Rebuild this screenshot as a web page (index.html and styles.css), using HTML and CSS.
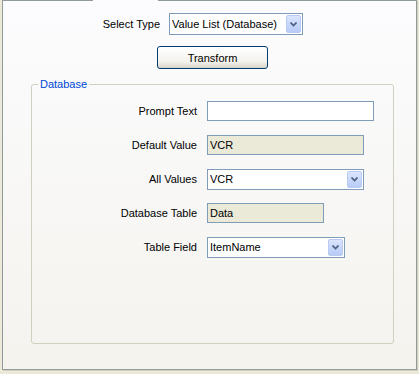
FILE: index.html
```html
<!DOCTYPE html>
<html lang="en">
<head>
    <meta charset="UTF-8">
    <title>Value List Settings</title>
    <link rel="stylesheet" href="styles.css">
</head>
<body>
    <div class="tabpage">
        <div class="type-row">
            <label class="type-label">Select Type</label>
            <div class="combo type-combo">
                <span class="combo-text">Value List (Database)</span>
                <span class="combo-btn">
                    <svg width="7" height="5" viewBox="0 0 7 5"><path d="M0.5 0.5 L3.5 3.5 L6.5 0.5" fill="none" stroke="#4d6185" stroke-width="1.7"/></svg>
                </span>
            </div>
        </div>
        <button class="xp-button">Transform</button>

        <fieldset class="group">
            <legend>Database</legend>
            <div class="field">
                <label>Prompt Text</label>
                <input type="text" class="text prompt">
            </div>
            <div class="field">
                <label>Default Value</label>
                <input type="text" class="text readonly default" value="VCR" readonly>
            </div>
            <div class="field">
                <label>All Values</label>
                <div class="combo all-combo">
                    <span class="combo-text">VCR</span>
                    <span class="combo-btn">
                        <svg width="7" height="5" viewBox="0 0 7 5"><path d="M0.5 0.5 L3.5 3.5 L6.5 0.5" fill="none" stroke="#4d6185" stroke-width="1.7"/></svg>
                    </span>
                </div>
            </div>
            <div class="field">
                <label>Database Table</label>
                <input type="text" class="text readonly table" value="Data" readonly>
            </div>
            <div class="field">
                <label>Table Field</label>
                <div class="combo field-combo">
                    <span class="combo-text">ItemName</span>
                    <span class="combo-btn">
                        <svg width="7" height="5" viewBox="0 0 7 5"><path d="M0.5 0.5 L3.5 3.5 L6.5 0.5" fill="none" stroke="#4d6185" stroke-width="1.7"/></svg>
                    </span>
                </div>
            </div>
        </fieldset>
    </div>
</body>
</html>
```

FILE: styles.css
```css
body {
    margin: 0;
    padding: 0;
    width: 419px;
    height: 374px;
    background-color: #ece9d8;
    font-family: "Liberation Sans", Arial, sans-serif;
    font-size: 11px;
    color: #000;
    overflow: hidden;
}
.tabpage {
    position: relative;
    box-sizing: border-box;
    margin-left: 2px;
    width: 415px;
    height: 370px;
    border: 1px solid #919b9c;
    box-shadow: 1px 1px 0 #d0cebf;
    background: linear-gradient(#fcfcfe, #f4f3ee);
}
/* gap in the top edge under the selected tab */
.tabpage::before {
    content: "";
    position: absolute;
    top: -1px;
    left: 90px;
    width: 65px;
    height: 1px;
    background-color: #fcfcfe;
}
.type-row {
    display: flex;
    align-items: center;
    margin-top: 12px;
    height: 22px;
}
.type-label {
    width: 157px;
    text-align: right;
    margin-right: 9px;
}
.combo {
    box-sizing: border-box;
    display: flex;
    align-items: center;
    height: 21px;
    border: 1px solid #7f9db9;
    background-color: #fff;
    padding: 1px 1px 1px 2px;
}
.type-combo {
    width: 134px;
    height: 22px;
}
.combo-text {
    flex: 1;
    white-space: nowrap;
    overflow: hidden;
}
.combo-btn {
    box-sizing: border-box;
    display: flex;
    align-items: center;
    justify-content: center;
    width: 15px;
    height: 100%;
    border: 1px solid #b9cbf3;
    border-radius: 2px;
    background: linear-gradient(#dbe5fd, #b7cbf7);
}
.xp-button {
    display: block;
    box-sizing: border-box;
    margin: 11px 0 0 154px;
    width: 111px;
    height: 23px;
    border: 1px solid #003c74;
    border-radius: 3px;
    background: linear-gradient(#ffffff, #f3f2ec 70%, #d8d4c8);
    font-family: inherit;
    font-size: 11px;
    color: #000;
    padding: 0;
}
.group {
    box-sizing: border-box;
    margin: 9px 0 0 28px;
    width: 363px;
    height: 266px;
    border: 1px solid #d0d0bf;
    border-radius: 3px;
    padding: 10px 0 0 0;
    min-width: 0;
}
.group legend {
    margin-left: 6px;
    padding: 0 2px;
    color: #0046d5;
    line-height: 13px;
}
.field {
    display: flex;
    align-items: center;
    height: 20px;
    margin-bottom: 14px;
}
.field label {
    width: 165px;
    text-align: right;
    margin-right: 10px;
    white-space: nowrap;
}
.text {
    box-sizing: border-box;
    height: 20px;
    border: 1px solid #7f9db9;
    background-color: #fff;
    padding: 0 2px;
    font-family: inherit;
    font-size: 11px;
    color: #000;
    outline: none;
}
.text.readonly {
    background-color: #ebe9d8;
}
.prompt {
    width: 167px;
}
.default {
    width: 157px;
}
.table {
    width: 117px;
}
.all-combo {
    width: 157px;
}
.field-combo {
    width: 138px;
}
```
